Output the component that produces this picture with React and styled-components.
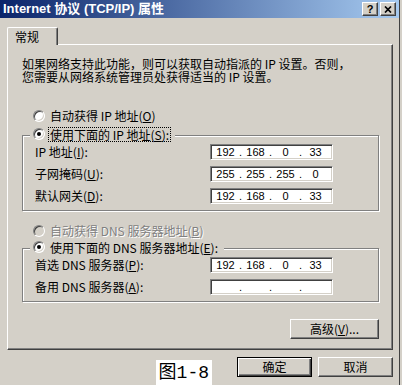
import React from "react";
import styled, { createGlobalStyle } from "styled-components";

const GlobalStyle = createGlobalStyle`
  html, body {
    margin: 0;
    padding: 0;
    background: #d4d0c8;
  }
  body {
    font-family: "Noto Sans CJK SC", sans-serif;
    font-size: 12px;
    color: #000;
  }
  * {
    box-sizing: border-box;
  }
`;

const Window = styled.div`
  width: 400px;
  height: 385px;
  border-right: 1px solid #404040;
  background: #d4d0c8;
  overflow: hidden;
  display: flex;
  flex-direction: column;
`;

const TitleBar = styled.div`
  height: 18px;
  flex: none;
  display: flex;
  align-items: center;
  padding: 0 3px 0 3px;
  background: linear-gradient(to right, #0a246a, #a6caf0);
`;

const Title = styled.span`
  flex: 1;
  color: #fff;
  font: bold 13px/18px "Liberation Sans", "Noto Sans CJK SC", sans-serif;
  white-space: nowrap;
`;

const TitleButton = styled.div`
  width: 16px;
  height: 14px;
  margin-left: 2px;
  display: flex;
  align-items: center;
  justify-content: center;
  background: #d4d0c8;
  border: 1px solid;
  border-color: #fff #404040 #404040 #fff;
  box-shadow: inset -1px -1px 0 #808080;
  font: bold 11px/1 "Liberation Sans", sans-serif;
  color: #000;
`;

const Body = styled.div`
  flex: 1;
  padding: 9px 6px 0 7px;
  display: flex;
  flex-direction: column;
`;

const TabStrip = styled.div`
  display: flex;
  height: 18px;
  position: relative;
  z-index: 1;
`;

const Tab = styled.div`
  width: 51px;
  height: 18px;
  padding: 1px 0 0 7px;
  background: #d4d0c8;
  border-top: 1px solid #fff;
  border-left: 1px solid #fff;
  border-right: 1px solid #404040;
  box-shadow: inset -1px 0 0 #808080;
  border-radius: 2px 2px 0 0;
  line-height: 15px;
`;

const Panel = styled.div`
  margin-top: -1px;
  border: 1px solid;
  border-color: #fff #404040 #404040 #fff;
  box-shadow: inset -1px -1px 0 #808080;
  padding: 12px 13px 10px 14px;
`;

const Description = styled.p`
  margin: 0;
  line-height: 13px;
  white-space: nowrap;
`;

const RadioRow = styled.div`
  display: flex;
  align-items: center;
  height: 16px;
  gap: 5px;
  padding-left: 11px;
  margin-top: ${(p) => p.$top}px;
  color: ${(p) => (p.$disabled ? "#808080" : "#000")};
  text-shadow: ${(p) => (p.$disabled ? "1px 1px 0 #fff" : "none")};
  line-height: 14px;
  white-space: nowrap;
`;

const RadioDot = styled.span`
  width: 12px;
  height: 12px;
  flex: none;
  border-radius: 50%;
  border: 1px solid;
  border-color: #808080 #fff #fff #808080;
  box-shadow: inset 1px 1px 0 #404040, inset -1px -1px 0 #d4d0c8;
  background: ${(p) => (p.$disabled ? "#d4d0c8" : "#fff")};
  display: flex;
  align-items: center;
  justify-content: center;
  text-shadow: none;

  &::after {
    content: "";
    width: 4px;
    height: 4px;
    border-radius: 50%;
    background: #000;
    display: ${(p) => (p.$checked ? "block" : "none")};
  }
`;

const Group = styled.div`
  margin-top: ${(p) => p.$top}px;
  border: 1px solid #808080;
  box-shadow: inset 1px 1px 0 #fff, 1px 1px 0 #fff;
  padding: 0 0 6px 0;
`;

const Legend = styled.div`
  display: flex;
  align-items: center;
  gap: 3px;
  width: fit-content;
  height: 16px;
  margin: -10px 0 2px 7px;
  padding: 0 4px 0 3px;
  background: #d4d0c8;
  white-space: nowrap;
`;

const LegendText = styled.span`
  border: 1px dotted ${(p) => (p.$focused ? "#000" : "transparent")};
  padding: 0 1px;
  line-height: 13px;
`;

const Rows = styled.div`
  display: flex;
  flex-direction: column;
  gap: 6px;
  padding-left: 12px;
`;

const Row = styled.div`
  display: flex;
  align-items: center;
  height: 16px;
`;

const Label = styled.span`
  width: 175px;
  line-height: 14px;
  white-space: nowrap;
`;

const IpBox = styled.div`
  width: 123px;
  height: 16px;
  display: flex;
  align-items: center;
  padding-left: 1px;
  background: #fff;
  border: 1px solid;
  border-color: #808080 #fff #fff #808080;
  box-shadow: inset 1px 1px 0 #404040, inset -1px -1px 0 #d4d0c8;
  font: 11px/13px "Liberation Sans", sans-serif;
`;

const Octet = styled.span`
  width: 27px;
  text-align: center;
`;

const Dot = styled.span`
  width: 3px;
  text-align: center;
`;

const ButtonRow = styled.div`
  display: flex;
  justify-content: flex-end;
  margin-top: 17px;
`;

const Button = styled.div`
  width: ${(p) => p.$width}px;
  height: 20px;
  display: flex;
  align-items: center;
  justify-content: center;
  background: #d4d0c8;
  border: 1px solid;
  border-color: ${(p) => (p.$default ? "#000" : "#fff #404040 #404040 #fff")};
  box-shadow: ${(p) =>
    p.$default
      ? "inset 1px 1px 0 #fff, inset -1px -1px 0 #404040, inset -2px -2px 0 #808080"
      : "inset -1px -1px 0 #808080"};
  line-height: 14px;
  white-space: nowrap;
`;

const Footer = styled.div`
  display: flex;
  justify-content: flex-end;
  align-items: flex-start;
  gap: 6px;
  margin-top: 7px;
`;

const Caption = styled.div`
  margin: 3px 19px 0 0;
  height: 30px;
  padding: 1px 3px 0 3px;
  background: #fff;
  font: 18px/24px "Liberation Mono", "Noto Sans CJK SC", monospace;
  white-space: nowrap;
`;

const Key = ({ children }) => (
  <>
    (<u>{children}</u>)
  </>
);

const IpField = ({ value }) => {
  const parts = value ? value.split(".") : ["", "", "", ""];
  return (
    <IpBox>
      {parts.map((p, i) => (
        <React.Fragment key={i}>
          <Octet>{p}</Octet>
          {i < 3 && <Dot>.</Dot>}
        </React.Fragment>
      ))}
    </IpBox>
  );
};

const App = () => {
  return (
    <>
      <GlobalStyle />
      <Window>
        <TitleBar>
          <Title>Internet 协议 (TCP/IP) 属性</Title>
          <TitleButton>?</TitleButton>
          <TitleButton>
            <svg width="8" height="7" viewBox="0 0 8 7">
              <path d="M1 0.5 L7 6.5 M7 0.5 L1 6.5" stroke="#000" strokeWidth="1.7" />
            </svg>
          </TitleButton>
        </TitleBar>
        <Body>
          <TabStrip>
            <Tab>常规</Tab>
          </TabStrip>
          <Panel>
            <Description>
              如果网络支持此功能，则可以获取自动指派的 IP 设置。否则，
              <br />
              您需要从网络系统管理员处获得适当的 IP 设置。
            </Description>

            <RadioRow $top={25}>
              <RadioDot />
              <span>
                自动获得 IP 地址<Key>O</Key>
              </span>
            </RadioRow>

            <Group $top={11}>
              <Legend>
                <RadioDot $checked />
                <LegendText $focused>
                  使用下面的 IP 地址<Key>S</Key>:
                </LegendText>
              </Legend>
              <Rows>
                <Row>
                  <Label>
                    IP 地址<Key>I</Key>:
                  </Label>
                  <IpField value="192.168.0.33" />
                </Row>
                <Row>
                  <Label>
                    子网掩码<Key>U</Key>:
                  </Label>
                  <IpField value="255.255.255.0" />
                </Row>
                <Row>
                  <Label>
                    默认网关<Key>D</Key>:
                  </Label>
                  <IpField value="192.168.0.33" />
                </Row>
              </Rows>
            </Group>

            <RadioRow $top={12} $disabled>
              <RadioDot $disabled />
              <span>
                自动获得 DNS 服务器地址<Key>B</Key>
              </span>
            </RadioRow>

            <Group $top={9}>
              <Legend>
                <RadioDot $checked />
                <LegendText>
                  使用下面的 DNS 服务器地址<Key>E</Key>:
                </LegendText>
              </Legend>
              <Rows>
                <Row>
                  <Label>
                    首选 DNS 服务器<Key>P</Key>:
                  </Label>
                  <IpField value="192.168.0.33" />
                </Row>
                <Row>
                  <Label>
                    备用 DNS 服务器<Key>A</Key>:
                  </Label>
                  <IpField />
                </Row>
              </Rows>
            </Group>

            <ButtonRow>
              <Button $width={89}>
                高级<Key>V</Key>...
              </Button>
            </ButtonRow>
          </Panel>

          <Footer>
            <Caption>图1-8</Caption>
            <Button $width={75} $default>
              确定
            </Button>
            <Button $width={75}>取消</Button>
          </Footer>
        </Body>
      </Window>
    </>
  );
};

export default App;
